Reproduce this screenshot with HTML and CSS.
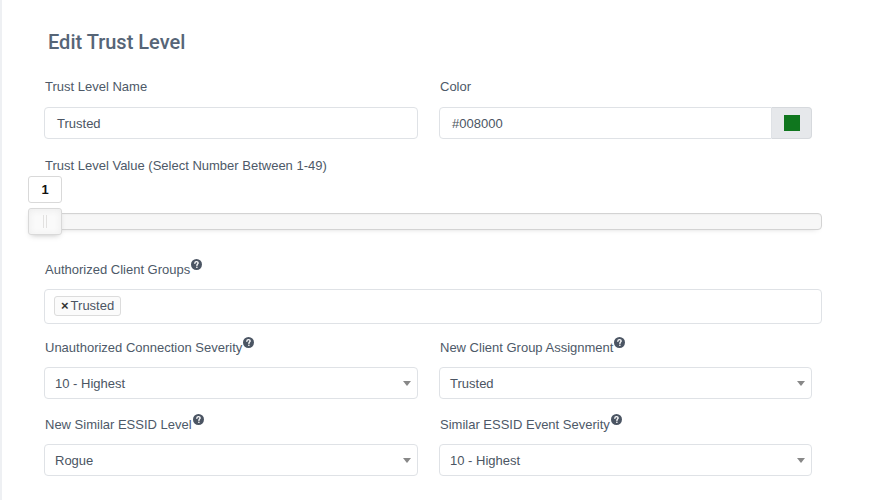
FILE: index.html
```html
<!DOCTYPE html>
<html>
<head>
<meta charset="utf-8">
<link rel="stylesheet" href="styles.css">
</head>
<body>
<div class="page">
  <div class="form">
    <h1 class="title">Edit Trust Level</h1>

    <div class="row first-row">
      <div class="group col-left">
        <label class="label">Trust Level Name</label>
        <div class="input">Trusted</div>
      </div>
      <div class="group col-right">
        <label class="label">Color</label>
        <div class="input-group">
          <div class="input grow">#008000</div>
          <div class="addon"><span class="swatch"></span></div>
        </div>
      </div>
    </div>

    <div class="group slider-group">
      <label class="label">Trust Level Value (Select Number Between 1-49)</label>
      <div class="slider-value">1</div>
      <div class="track">
        <div class="handle"></div>
      </div>
    </div>

    <div class="group multi-group">
      <label class="label has-help">Authorized Client Groups<svg class="help" viewBox="0 0 12 12" width="11" height="11"><circle cx="6" cy="6" r="6" fill="#4b5563"/><path d="M4.2 4.6 C4.2 3.5 5 2.9 6 2.9 C7.1 2.9 7.8 3.5 7.8 4.4 C7.8 5.5 6.6 5.6 6.5 6.6 L6.5 7" fill="none" stroke="#fff" stroke-width="1.5" stroke-linecap="round"/><circle cx="6.4" cy="9" r="0.9" fill="#fff"/></svg></label>
      <div class="multi">
        <span class="tag"><span class="tag-x">×</span>Trusted</span>
      </div>
    </div>

    <div class="row">
      <div class="group col-left">
        <label class="label has-help">Unauthorized Connection Severity<svg class="help" viewBox="0 0 12 12" width="11" height="11"><circle cx="6" cy="6" r="6" fill="#4b5563"/><path d="M4.2 4.6 C4.2 3.5 5 2.9 6 2.9 C7.1 2.9 7.8 3.5 7.8 4.4 C7.8 5.5 6.6 5.6 6.5 6.6 L6.5 7" fill="none" stroke="#fff" stroke-width="1.5" stroke-linecap="round"/><circle cx="6.4" cy="9" r="0.9" fill="#fff"/></svg></label>
        <div class="select"><span>10 - Highest</span><span class="caret"></span></div>
      </div>
      <div class="group col-right">
        <label class="label has-help">New Client Group Assignment<svg class="help" viewBox="0 0 12 12" width="11" height="11"><circle cx="6" cy="6" r="6" fill="#4b5563"/><path d="M4.2 4.6 C4.2 3.5 5 2.9 6 2.9 C7.1 2.9 7.8 3.5 7.8 4.4 C7.8 5.5 6.6 5.6 6.5 6.6 L6.5 7" fill="none" stroke="#fff" stroke-width="1.5" stroke-linecap="round"/><circle cx="6.4" cy="9" r="0.9" fill="#fff"/></svg></label>
        <div class="select"><span>Trusted</span><span class="caret"></span></div>
      </div>
    </div>

    <div class="row">
      <div class="group col-left">
        <label class="label has-help">New Similar ESSID Level<svg class="help" viewBox="0 0 12 12" width="11" height="11"><circle cx="6" cy="6" r="6" fill="#4b5563"/><path d="M4.2 4.6 C4.2 3.5 5 2.9 6 2.9 C7.1 2.9 7.8 3.5 7.8 4.4 C7.8 5.5 6.6 5.6 6.5 6.6 L6.5 7" fill="none" stroke="#fff" stroke-width="1.5" stroke-linecap="round"/><circle cx="6.4" cy="9" r="0.9" fill="#fff"/></svg></label>
        <div class="select"><span>Rogue</span><span class="caret"></span></div>
      </div>
      <div class="group col-right">
        <label class="label has-help">Similar ESSID Event Severity<svg class="help" viewBox="0 0 12 12" width="11" height="11"><circle cx="6" cy="6" r="6" fill="#4b5563"/><path d="M4.2 4.6 C4.2 3.5 5 2.9 6 2.9 C7.1 2.9 7.8 3.5 7.8 4.4 C7.8 5.5 6.6 5.6 6.5 6.6 L6.5 7" fill="none" stroke="#fff" stroke-width="1.5" stroke-linecap="round"/><circle cx="6.4" cy="9" r="0.9" fill="#fff"/></svg></label>
        <div class="select"><span>10 - Highest</span><span class="caret"></span></div>
      </div>
    </div>
  </div>
</div>
</body>
</html>
```

FILE: styles.css
```css
html, body {
  margin: 0;
  padding: 0;
  background: #ffffff;
  font-family: "Liberation Sans", Arial, sans-serif;
  color: #4b5563;
}

.page {
  border-left: 2px solid #eef0f3;
  min-height: 500px;
  box-sizing: border-box;
}

.form {
  margin-left: 42px;
  width: 778px;
  padding-top: 30px;
}

.title {
  margin: 0 0 25px 4px;
  font-family: Roboto, "Liberation Sans", sans-serif;
  font-size: 20px;
  line-height: 24px;
  font-weight: 500;
  color: #566577;
}

.row {
  display: flex;
  gap: 21px;
}

.col-left {
  width: 374px;
}

.col-right {
  width: 373px;
}

.group {
  margin-bottom: 18px;
}

.first-row .group {
  margin-bottom: 19px;
}

.label {
  display: block;
  height: 16px;
  font-size: 13px;
  line-height: 16px;
  margin-bottom: 12px;
  margin-left: 1px;
  color: #4d5968;
}

.label.has-help {
  margin-bottom: 11px;
}

.help {
  vertical-align: baseline;
  position: relative;
  top: -4px;
  margin-left: 1px;
}

.input {
  box-sizing: border-box;
  height: 32px;
  border: 1px solid #dfe2e6;
  border-radius: 4px;
  padding: 0 12px;
  font-size: 13px;
  line-height: 31px;
  color: #4b5563;
  background: #fff;
}

.input-group {
  display: flex;
}

.input-group .grow {
  flex: 1;
  border-radius: 4px 0 0 4px;
}

.addon {
  width: 40px;
  height: 32px;
  box-sizing: border-box;
  border: 1px solid #d6d9dd;
  border-left: none;
  border-radius: 0 4px 4px 0;
  background: #e6e8eb;
  display: flex;
  align-items: center;
  justify-content: center;
}

.swatch {
  width: 16px;
  height: 16px;
  background: #0f761e;
}

.slider-group {
  margin-bottom: 32px;
}

.slider-group .label {
  margin-bottom: 2px;
}

.slider-value {
  box-sizing: border-box;
  width: 34px;
  height: 27px;
  margin-left: -16px;
  border: 1px solid #d9d9d9;
  border-radius: 3px;
  background: #fff;
  color: #111;
  font-weight: bold;
  font-size: 13px;
  display: flex;
  align-items: center;
  justify-content: center;
}

.track {
  position: relative;
  margin-top: 10px;
  height: 17px;
  box-sizing: border-box;
  border: 1px solid #d3d3d3;
  border-radius: 4px;
  background: #f7f7f7;
  box-shadow: inset 0 1px 1px #f0f0f0, 0 3px 6px -5px #bbb;
}

.handle {
  position: absolute;
  left: -17px;
  top: -6px;
  width: 34px;
  height: 27px;
  box-sizing: border-box;
  border: 1px solid #d9d9d9;
  border-radius: 3px;
  background: #fafafa;
  box-shadow: inset 0 0 1px #fff, inset 0 1px 7px #ebebeb, 0 3px 6px -3px #bbb;
}

.handle::before,
.handle::after {
  content: "";
  position: absolute;
  top: 6px;
  width: 1px;
  height: 13px;
  background: #e2e1e0;
}

.handle::before {
  left: 14px;
}

.handle::after {
  left: 17px;
}

.multi-group {
  margin-bottom: 16px;
}

.multi {
  box-sizing: border-box;
  height: 35px;
  border: 1px solid #dfe2e6;
  border-radius: 4px;
  padding: 6px 9px;
  display: flex;
  align-items: flex-start;
}

.tag {
  box-sizing: border-box;
  height: 20px;
  border: 1px solid #dcdcdc;
  border-radius: 3px;
  background: #fbfbfb;
  padding: 0 6px 0 6px;
  font-size: 13px;
  line-height: 18px;
  color: #4b5563;
  display: inline-flex;
  align-items: center;
}

.tag-x {
  font-weight: bold;
  color: #333;
  margin-right: 2px;
  font-size: 13px;
}

.select {
  box-sizing: border-box;
  height: 32px;
  border: 1px solid #dfe2e6;
  border-radius: 4px;
  padding: 0 5px 0 10px;
  font-size: 13px;
  color: #4b5563;
  display: flex;
  align-items: center;
  justify-content: space-between;
}

.caret {
  width: 0;
  height: 0;
  border-left: 4px solid transparent;
  border-right: 4px solid transparent;
  border-top: 5px solid #888;
  margin-right: 1px;
}
```
